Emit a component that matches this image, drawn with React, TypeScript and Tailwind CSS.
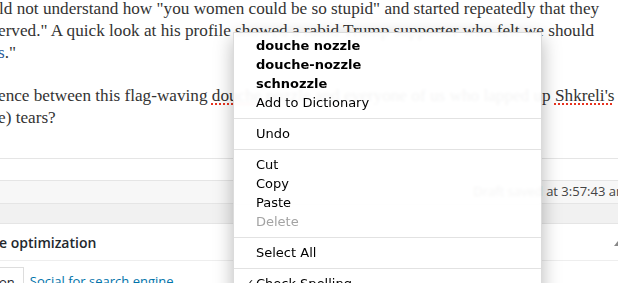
import React from "react";

function MenuItem({
  children,
  bold,
  disabled,
  checked,
}: {
  children: React.ReactNode;
  bold?: boolean;
  disabled?: boolean;
  checked?: boolean;
}) {
  return (
    <div
      className={
        "relative h-[19px] leading-[19px] pl-[22px] whitespace-nowrap " +
        (bold ? "font-bold " : "") +
        (disabled ? "text-[#a3a3a3]" : "text-black")
      }
    >
      {checked && (
        <span className="absolute left-[11px] top-0 text-[11px]">✓</span>
      )}
      {children}
    </div>
  );
}

function Sep() {
  return (
    <div className="h-[12px] flex items-center">
      <div className="h-px w-full bg-[#e2e2e2]" />
    </div>
  );
}

export default function App() {
  return (
    <div className="relative w-[618px] h-[283px] overflow-hidden bg-white">
      {/* Article text */}
      <div className="font-['Liberation_Serif',serif] text-[17.2px] leading-[22px] text-[#333] -mt-[2px]">
        <p className="whitespace-nowrap -ml-[1px]">
          ld not understand how "you women could be so stupid" and started repeatedly that they
        </p>
        <p className="whitespace-nowrap -ml-[2px]">
          erved." A quick look at his profile showed a rabid Trump supporter who felt we should
        </p>
        <p className="whitespace-nowrap -ml-[2px]">
          <span className="text-[#2b5b9a]">s</span>."
        </p>
        <p className="whitespace-nowrap -ml-[2px] mt-[21px]">
          ence between this flag-waving{" "}
          <span className="underline decoration-dotted decoration-[#e8321e] decoration-2 underline-offset-[2px]">
            douche
          </span>{" "}
          nozzle and everyone of us who lapped up{" "}
          <span className="underline decoration-dotted decoration-[#e8321e] decoration-2 underline-offset-[2px]">
            Shkreli's
          </span>
        </p>
        <p className="whitespace-nowrap -ml-[2px]">e) tears?</p>
      </div>

      {/* WordPress editor chrome */}
      <div className="mt-[29px] font-['Open_Sans',sans-serif]">
        <div className="h-[22px] border-t border-[#e5e5e5] bg-white" />
        <div className="h-[23px] border-t border-[#e5e5e5] bg-[#f7f7f7] flex items-center justify-end text-[13px] text-[#444]">
          <span className="-mr-[10px] whitespace-nowrap">Draft saved at 3:57:43 am</span>
        </div>
        <div className="h-[20px] border-t border-[#e5e5e5] bg-[#f1f1f1]" />
        <div className="border-t border-[#e5e5e5] bg-white">
          <div className="h-[37px] flex items-center justify-between border-b border-[#eeeeee]">
            <span className="-ml-[1px] text-[14px] font-semibold text-[#23282d] whitespace-nowrap">
              e optimization
            </span>
            <span className="mr-[-4px] mt-[2px] w-0 h-0 border-l-[4px] border-r-[4px] border-b-[5px] border-l-transparent border-r-transparent border-b-[#888]" />
          </div>
          <div className="pt-[6px] flex items-end text-[13px]">
            <div className="h-[20px] border border-b-0 border-l-0 border-[#dddddd] bg-white pr-[8px] pt-[6px] leading-[16px] text-[#23282d]">
              <span className="-ml-[1px]">on</span>
            </div>
            <div className="ml-[6px] pt-[6px] h-[20px] leading-[16px] text-[#0073aa] whitespace-nowrap">
              Social for search engine
            </div>
          </div>
        </div>
      </div>

      {/* Context menu */}
      <div className="absolute left-[233px] top-[32px] w-[309px] pt-[3px] pb-[4px] bg-[rgba(255,255,255,0.94)] backdrop-blur-[1.5px] border border-[rgba(0,0,0,0.14)] shadow-[0_6px_18px_rgba(0,0,0,0.28)] font-['DejaVu_Sans',sans-serif] text-[13px]">
        <MenuItem bold>douche nozzle</MenuItem>
        <MenuItem bold>douche-nozzle</MenuItem>
        <MenuItem bold>schnozzle</MenuItem>
        <MenuItem>Add to Dictionary</MenuItem>
        <Sep />
        <MenuItem>Undo</MenuItem>
        <Sep />
        <MenuItem>Cut</MenuItem>
        <MenuItem>Copy</MenuItem>
        <MenuItem>Paste</MenuItem>
        <MenuItem disabled>Delete</MenuItem>
        <Sep />
        <MenuItem>Select All</MenuItem>
        <Sep />
        <MenuItem checked>Check Spelling</MenuItem>
        <MenuItem>Check Grammar</MenuItem>
      </div>
    </div>
  );
}
